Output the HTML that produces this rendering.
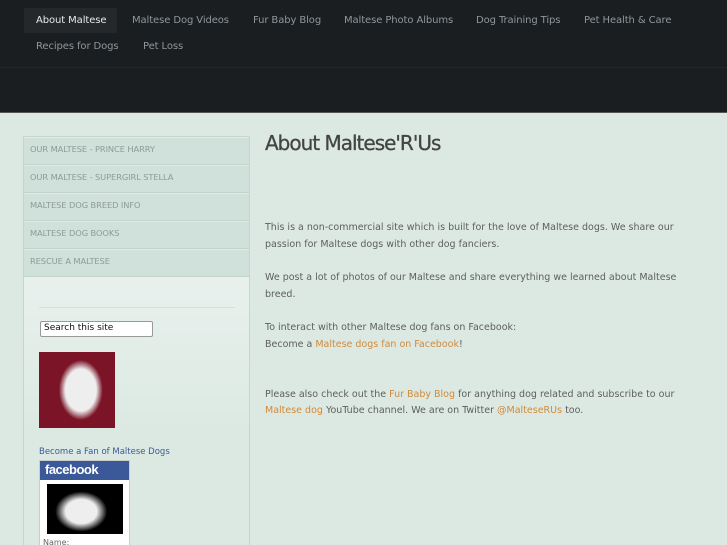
<!DOCTYPE html>
<html><head><meta charset="utf-8"><style>
*{margin:0;padding:0;box-sizing:border-box}
html,body{width:727px;height:545px;overflow:hidden}
body{background:#dce9e3;font-family:"DejaVu Sans","Liberation Sans",sans-serif;position:relative}
#top{position:absolute;left:0;top:0;width:727px;height:113px;background:#1b1e21;border-bottom:1px solid #555}
#top .line{position:absolute;left:0;top:67px;width:727px;height:1px;background:#24282b}
.nav{position:absolute;font-size:10px;color:#8e979c;white-space:nowrap;letter-spacing:-.1px}
.nav.act{background:#24282b;color:#e8e8e8;padding:7px 11px 7px 12px;left:24px;top:8px}
#side{position:absolute;left:23px;top:136px;width:227px;height:420px;background:linear-gradient(#f4f8f6,#dce9e3 70%);border:1px solid #c6d6cf}
.mi{height:28px;border-bottom:1px solid #c2d2cb;border-top:1px solid #e0ebe6;background:#d0e0da;font-size:8.3px;color:#8f9a96;padding-left:6px;line-height:23px;letter-spacing:-.1px}
h1{position:absolute;left:265px;top:131px;font-size:20px;font-weight:normal;color:#444;letter-spacing:-1px;-webkit-text-stroke:.3px #444}
#main{position:absolute;left:265px;top:220px;width:440px;font-size:9.5px;line-height:16.7px;color:#5e5e5e}
#main p{margin-bottom:16.7px}
a{color:#d08a38;text-decoration:none}
</style></head><body>
<div id="top"><div class="line"></div>
<div class="nav act">About Maltese</div>
<div class="nav" style="left:132px;top:15px">Maltese Dog Videos</div>
<div class="nav" style="left:253px;top:15px">Fur Baby Blog</div>
<div class="nav" style="left:344px;top:15px">Maltese Photo Albums</div>
<div class="nav" style="left:476px;top:15px">Dog Training Tips</div>
<div class="nav" style="left:584px;top:15px">Pet Health &amp; Care</div>
<div class="nav" style="left:36px;top:41px">Recipes for Dogs</div>
<div class="nav" style="left:143px;top:41px">Pet Loss</div>
</div>
<div id="side">
<div class="mi">OUR MALTESE - PRINCE HARRY</div>
<div class="mi">OUR MALTESE - SUPERGIRL STELLA</div>
<div class="mi">MALTESE DOG BREED INFO</div>
<div class="mi">MALTESE DOG BOOKS</div>
<div class="mi">RESCUE A MALTESE</div>
<div style="position:absolute;left:15px;top:170px;width:196px;height:1px;background:#d4e0db"></div>
<div style="position:absolute;left:16px;top:184px;width:113px;height:16px;background:#fff;border:1px solid #999;border-radius:2px;font-size:9px;color:#111;padding:1px 3px">Search this site</div>
<div style="position:absolute;left:15px;top:215px;width:76px;height:76px;background:radial-gradient(ellipse 22px 30px at 55% 50%,#eee 0 70%,#7a1426 100%)"></div>
<div style="position:absolute;left:15px;top:310px;font-size:8.5px;color:#3b5998">Become a Fan of Maltese Dogs</div>
<div style="position:absolute;left:15px;top:323px;width:91px;height:100px;background:#fff;border:1px solid #ccc">
<div style="background:#3b5998;height:19px;color:#fff;font:bold 13px 'Liberation Sans',sans-serif;padding:1px 5px;letter-spacing:-.5px">facebook</div>
<div style="margin:4px 7px;width:76px;height:50px;background:radial-gradient(ellipse 26px 20px at 45% 55%,#eee 0 60%,#000 100%)"></div>
<div style="font-size:8px;color:#666;padding-left:3px">Name:</div></div>
</div>
<h1>About Maltese'R'Us</h1>
<div id="main">
<p>This is a non-commercial site which is built for the love of Maltese dogs. We share our passion for Maltese dogs with other dog fanciers.</p>
<p>We post a lot of photos of our Maltese and share everything we learned about Maltese breed.</p>
<p>To interact with other Maltese dog fans on Facebook:<br>Become a <a>Maltese dogs fan on Facebook</a>!</p>
<p style="margin-top:33px">Please also check out the <a>Fur Baby Blog</a> for anything dog related and subscribe to our <a>Maltese dog</a> YouTube channel. We are on Twitter <a>@MalteseRUs</a> too.</p>
</div>
</body></html>
